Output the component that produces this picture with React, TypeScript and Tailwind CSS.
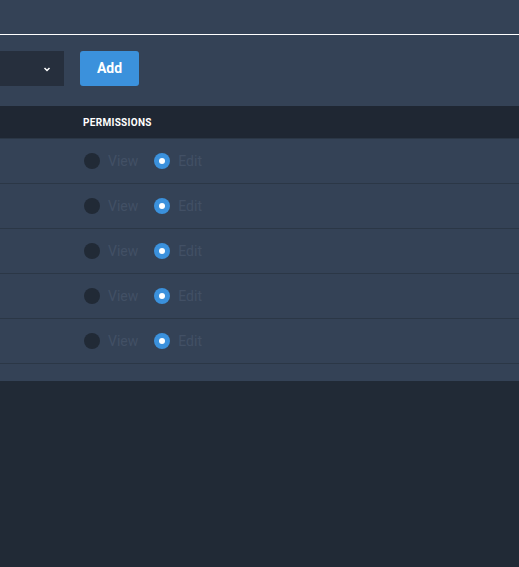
const rows = [1, 2, 3, 4, 5];

export default function App() {
  return (
    <div className="h-[567px] w-[519px] overflow-hidden bg-[#212a36] font-[Roboto,sans-serif]">
      <div className="bg-[#344256]">
        <div className="h-[35px] border-b border-white" />
        <div className="flex items-center gap-4 pt-[16px] pb-[20px]">
          <div className="flex h-[35px] w-[64px] items-center justify-end bg-[#262f3d] pr-3 text-white">
            <svg width="10" height="10" viewBox="0 0 10 10" fill="none" stroke="currentColor" strokeWidth="1.5">
              <path d="M2.5 4l2.5 2.5L7.5 4" />
            </svg>
          </div>
          <button className="h-[35px] w-[59px] rounded-[3px] bg-[#3b91dc] text-[14px] font-bold text-white">Add</button>
        </div>
        <div className="flex h-[33px] items-center border-b border-[#2b3746] bg-[#1f2733] pl-[83px] text-[10px] font-bold tracking-[0.03em] text-white">
          PERMISSIONS
        </div>
        {rows.map((r) => (
          <div key={r} className="flex h-[45px] items-center border-b border-[#2b3746] pl-[84px] text-[14px] text-[#425065]">
            <span className="h-[16px] w-[16px] rounded-full bg-[#212a36]" />
            <span className="ml-2">View</span>
            <span className="ml-[16px] flex h-[16px] w-[16px] items-center justify-center rounded-full bg-[#3b91dc]">
              <span className="h-[6px] w-[6px] rounded-full bg-white" />
            </span>
            <span className="ml-2">Edit</span>
          </div>
        ))}
        <div className="h-[17px]" />
      </div>
    </div>
  );
}
